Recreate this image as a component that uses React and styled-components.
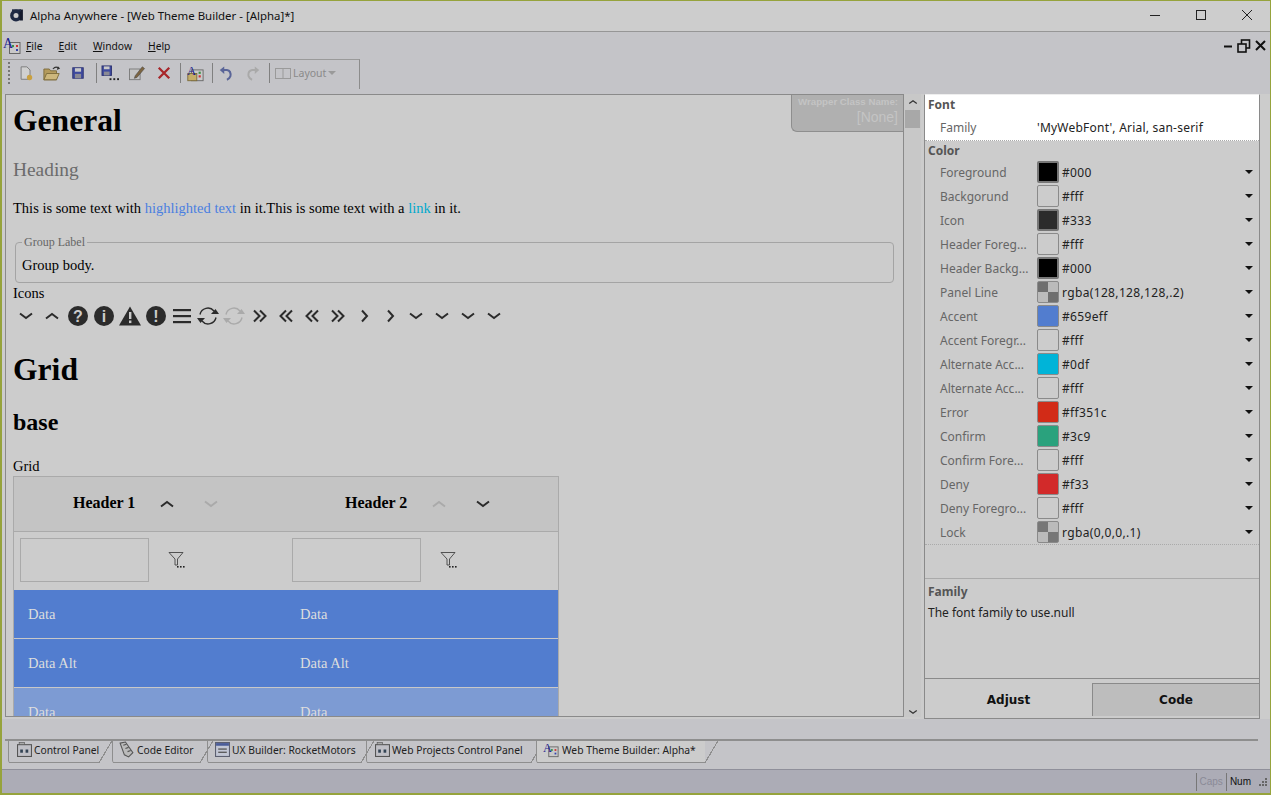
import styled, { createGlobalStyle } from 'styled-components'

const GlobalStyle = createGlobalStyle`
    html, body { margin: 0; padding: 0; background: #ccc; }
    body { font-family: "Noto Sans", "Liberation Sans", sans-serif; overflow: hidden; }
`

const colorRows = [
    { label: 'Foreground', value: '#000', swatch: '#000', dark: true },
    { label: 'Backgorund', value: '#fff', swatch: 'transparent' },
    { label: 'Icon', value: '#333', swatch: '#2b2b2b', dark: true },
    { label: 'Header Foreg...', value: '#fff', swatch: 'transparent' },
    { label: 'Header Backg...', value: '#000', swatch: '#000', dark: true },
    { label: 'Panel Line', value: 'rgba(128,128,128,.2)', checker: '#6f6f6f' },
    { label: 'Accent', value: '#659eff', swatch: '#527dcf' },
    { label: 'Accent Foregr...', value: '#fff', swatch: 'transparent' },
    { label: 'Alternate Acc...', value: '#0df', swatch: '#00b4d8' },
    { label: 'Alternate Acc...', value: '#fff', swatch: 'transparent' },
    { label: 'Error', value: '#ff351c', swatch: '#d22b17' },
    { label: 'Confirm', value: '#3c9', swatch: '#2aa27d' },
    { label: 'Confirm Fore...', value: '#fff', swatch: 'transparent' },
    { label: 'Deny', value: '#f33', swatch: '#d22a2a' },
    { label: 'Deny Foregro...', value: '#fff', swatch: 'transparent' },
    { label: 'Lock', value: 'rgba(0,0,0,.1)', checker: '#777' },
]

const tabs = [
    { label: 'Control Panel', icon: 'panel', width: 104, pad: 8, overlap: 0 },
    { label: 'Code Editor', icon: 'scroll', width: 101, pad: 5, overlap: 6 },
    { label: 'UX Builder: RocketMotors', icon: 'ux', width: 167, pad: 7, overlap: 8 },
    { label: 'Web Projects Control Panel', icon: 'panel', width: 178, pad: 8, overlap: 8 },
    { label: 'Web Theme Builder: Alpha*', icon: 'theme', width: 182, pad: 6, overlap: 0, gap: 3 },
]

const Chevron = ({ dir = 'down', color = '#2b2b2b', size = 16 }) => {
    const paths = {
        down: 'M2 5.5 L8 10 L14 5.5',
        up: 'M2 10.5 L8 6 L14 10.5',
        right: 'M6 2.5 L11 8 L6 13.5',
    }
    return (
        <svg width={size} height={size} viewBox="0 0 16 16" fill="none">
            <path d={paths[dir]} stroke={color} strokeWidth="2" />
        </svg>
    )
}

const Double = ({ left }) => (
    <svg width="16" height="16" viewBox="0 0 16 16" fill="none">
        <g transform={left ? 'translate(16 0) scale(-1 1)' : undefined} stroke="#2b2b2b" strokeWidth="2">
            <path d="M2 2.5 L7.5 8 L2 13.5" />
            <path d="M8 2.5 L13.5 8 L8 13.5" />
        </g>
    </svg>
)

const Disc = ({ mark }) => (
    <svg width="20" height="20" viewBox="0 0 20 20">
        <circle cx="10" cy="10" r="10" fill="#2b2b2b" />
        <text x="10" y="16" textAnchor="middle" fontFamily="Liberation Sans" fontWeight="700" fontSize="16" fill="#ccc">{mark}</text>
    </svg>
)

const Warning = () => (
    <svg width="22" height="20" viewBox="0 0 22 20">
        <path d="M11 0.5 L22 19.5 L0 19.5 Z" fill="#2b2b2b" />
        <rect x="10" y="6" width="2.4" height="7" fill="#ccc" />
        <rect x="10" y="14.5" width="2.4" height="2.6" fill="#ccc" />
    </svg>
)

const Menu = () => (
    <svg width="18" height="16" viewBox="0 0 18 16">
        <rect y="1" width="18" height="2.2" fill="#2b2b2b" />
        <rect y="7" width="18" height="2.2" fill="#2b2b2b" />
        <rect y="13" width="18" height="2.2" fill="#2b2b2b" />
    </svg>
)

const Sync = ({ color = '#2b2b2b' }) => (
    <svg width="22" height="20" viewBox="0 0 22 20" fill="none">
        <path d="M3 8.5 A8 8 0 0 1 17 5" stroke={color} strokeWidth="1.4" />
        <path d="M19 11.5 A8 8 0 0 1 5 15" stroke={color} strokeWidth="1.4" />
        <path d="M14 8 L22 8 L18.5 3 Z" fill={color} />
        <path d="M8 12 L0 12 L3.5 17 Z" fill={color} />
    </svg>
)

const Funnel = () => (
    <svg width="18" height="18" viewBox="0 0 18 18" fill="none">
        <path d="M1 1.5 H15 L9.5 8 V14 L7 14 V8 Z" stroke="#444" strokeWidth="0.9" />
        <rect x="9" y="15" width="1.6" height="1.6" fill="#222" />
        <rect x="12" y="15" width="1.6" height="1.6" fill="#222" />
        <rect x="15" y="15" width="1.6" height="1.6" fill="#222" />
    </svg>
)

const ThemeIcon = ({ size = 18 }) => (
    <svg width={size} height={size} viewBox="0 0 18 18">
        <rect x="6.5" y="5.5" width="10.5" height="11" fill="#c9c9c9" stroke="#666" />
        <rect x="9" y="8" width="2" height="2" fill="#3c8f45" />
        <rect x="13" y="8" width="2" height="2" fill="#c33" />
        <rect x="13" y="12" width="2" height="2" fill="#34a" />
        <text x="0" y="11" fontFamily="Liberation Serif" fontSize="14" fill="#1c1c8c">A</text>
    </svg>
)

const TabIcon = ({ kind }) => {
    if (kind === 'theme') return <ThemeIcon size={16} />
    if (kind === 'scroll') {
        return (
            <svg width="17" height="17" viewBox="0 0 16 16" fill="none">
                <path d="M2 2 L7 1 L14 11 L10 15 L6 13 Z" fill="#bbb" stroke="#555" />
                <path d="M5 4 L8 3 M7 7 L10 6 M9 10 L12 9" stroke="#555" />
            </svg>
        )
    }
    if (kind === 'ux') {
        return (
            <svg width="15" height="15" viewBox="0 0 14 14">
                <rect x="0.5" y="0.5" width="13" height="13" fill="#c2c6d4" stroke="#5c5f70" />
                <rect x="1" y="1" width="12" height="2.5" fill="#4a5c99" />
                <rect x="3" y="6" width="8" height="1.2" fill="#555" />
                <rect x="3" y="9" width="8" height="1.2" fill="#555" />
            </svg>
        )
    }
    return (
        <svg width="15" height="15" viewBox="0 0 14 14">
            <rect x="0.5" y="2.5" width="13" height="11" fill="#c0c0c6" stroke="#555" />
            <rect x="2" y="0.5" width="5" height="2" fill="#aaa" stroke="#555" strokeWidth="0.6" />
            <rect x="3" y="7" width="2.5" height="3" fill="#345" />
            <rect x="8" y="7" width="2.5" height="3" fill="#345" />
        </svg>
    )
}

const ToolIcons = {
    newFile: (
        <svg width="16" height="17" viewBox="0 0 18 18">
            <path d="M3.5 1.5 H10 L13.5 5 V15.5 H3.5 Z" fill="#d0d0d0" stroke="#777" />
            <circle cx="13" cy="13.5" r="3" fill="#c9a040" />
        </svg>
    ),
    open: (
        <svg width="18" height="17" viewBox="0 0 20 18">
            <path d="M1 4 H7 L8.5 6 H15 V16 H1 Z" fill="#b39a5c" stroke="#7b6a3a" />
            <path d="M1 16 L4 9 H18 L15 16 Z" fill="#cdb77c" stroke="#7b6a3a" />
            <path d="M11 4 Q14 0.5 17 3" stroke="#333" strokeWidth="1.2" fill="none" />
            <path d="M15.5 5 L19 3.5 L16.5 1 Z" fill="#333" />
        </svg>
    ),
    save: (
        <svg width="14" height="14" viewBox="0 0 16 16">
            <rect x="2" y="2" width="12" height="12" fill="#3e4a9e" stroke="#2c3270" />
            <rect x="4.5" y="2.5" width="7" height="4" fill="#c8c8c8" />
            <rect x="4.5" y="9" width="7" height="5" fill="#8a8a94" />
        </svg>
    ),
    saveAs: (
        <svg width="19" height="17" viewBox="0 0 20 18">
            <rect x="1" y="1" width="10" height="10" fill="#3e4a9e" stroke="#2c3270" />
            <rect x="3" y="1.5" width="6" height="3" fill="#c8c8c8" />
            <rect x="3" y="7" width="6" height="4" fill="#8a8a94" />
            <rect x="9" y="14" width="2" height="2" fill="#222" />
            <rect x="13" y="14" width="2" height="2" fill="#222" />
            <rect x="17" y="14" width="2" height="2" fill="#222" />
        </svg>
    ),
    edit: (
        <svg width="18" height="16" viewBox="0 0 20 18">
            <rect x="1.5" y="4.5" width="12" height="12" fill="#c4c4c4" stroke="#777" />
            <path d="M8 12 L16 2 L18.5 4 L10 14 L7 15 Z" fill="#7d6540" stroke="#444" strokeWidth="0.6" />
        </svg>
    ),
    del: (
        <svg width="14" height="14" viewBox="0 0 16 16">
            <path d="M2 2 L14 14 M14 2 L2 14" stroke="#a8262a" strokeWidth="2.6" />
        </svg>
    ),
    theme: (
        <svg width="18" height="17" viewBox="0 0 20 18">
            <rect x="6" y="5" width="13" height="12" fill="#c9c9c9" stroke="#666" />
            <rect x="2" y="9" width="10" height="8" fill="#c5ad68" stroke="#7b6a3a" />
            <rect x="14" y="7" width="2.4" height="2.4" fill="#3c8f45" />
            <rect x="14" y="11" width="2.4" height="2.4" fill="#c33" />
            <text x="1" y="11" fontFamily="Liberation Serif" fontSize="14" fill="#1c1c8c">A</text>
        </svg>
    ),
    undo: (
        <svg width="16" height="17" viewBox="0 0 18 18" fill="none">
            <path d="M5 5 H10 Q15 6 14 12 Q13 15 10 16" stroke="#5a6598" strokeWidth="2.2" />
            <path d="M7 1 L2 5 L7 9.5 Z" fill="#5a6598" />
        </svg>
    ),
    redo: (
        <svg width="16" height="17" viewBox="0 0 18 18" fill="none">
            <path d="M13 5 H8 Q3 6 4 12 Q5 15 8 16" stroke="#a9a9a9" strokeWidth="2.2" />
            <path d="M11 1 L16 5 L11 9.5 Z" fill="#a9a9a9" />
        </svg>
    ),
    layout: (
        <svg width="16" height="11" viewBox="0 0 16 11" fill="none">
            <rect x="0.5" y="0.5" width="15" height="10" stroke="#9a9a9a" />
            <path d="M8 0.5 V10.5" stroke="#9a9a9a" />
        </svg>
    ),
}

export default function App() {
    return (
        <Window>
            <GlobalStyle />
            <TitleBar>
                <svg width="16" height="16" viewBox="0 0 16 16" fill="none">
                    <circle cx="7" cy="8.5" r="4.2" stroke="#1f2a44" strokeWidth="3.4" />
                    <rect x="10.5" y="2.5" width="3.4" height="11" fill="#141a2c" />
                    <path d="M3 3.4 H12" stroke="#1f2a44" strokeWidth="2.2" />
                </svg>
                <TitleText>Alpha Anywhere - [Web Theme Builder - [Alpha]*]</TitleText>
                <WindowButtons>
                    <CaptionButton>
                        <svg width="12" height="12" viewBox="0 0 12 12"><path d="M1 6.5 H11" stroke="#222" /></svg>
                    </CaptionButton>
                    <CaptionButton>
                        <svg width="12" height="12" viewBox="0 0 12 12"><rect x="1.5" y="1.5" width="9" height="9" fill="none" stroke="#222" /></svg>
                    </CaptionButton>
                    <CaptionButton>
                        <svg width="12" height="12" viewBox="0 0 12 12"><path d="M1 1 L11 11 M11 1 L1 11" stroke="#222" /></svg>
                    </CaptionButton>
                </WindowButtons>
            </TitleBar>

            <MenuBar>
                <ThemeIcon />
                <MenuItem><u>F</u>ile</MenuItem>
                <MenuItem><u>E</u>dit</MenuItem>
                <MenuItem><u>W</u>indow</MenuItem>
                <MenuItem><u>H</u>elp</MenuItem>
                <MdiButtons>
                    <svg width="10" height="10" viewBox="0 0 10 10"><path d="M1 5.5 H9" stroke="#111" strokeWidth="2" /></svg>
                    <svg width="14" height="14" viewBox="0 0 14 14" fill="none">
                        <rect x="4.5" y="1" width="8" height="8" stroke="#111" strokeWidth="1.6" />
                        <rect x="1" y="5" width="8" height="8" fill="#c4c4c8" stroke="#111" strokeWidth="1.6" />
                    </svg>
                    <svg width="11" height="11" viewBox="0 0 11 11"><path d="M1 1 L10 10 M10 1 L1 10" stroke="#111" strokeWidth="2" /></svg>
                </MdiButtons>
            </MenuBar>

            <ToolBar>
                <Grip />
                <ToolSlot $w={26}>{ToolIcons.newFile}</ToolSlot>
                <ToolSlot $w={26}>{ToolIcons.open}</ToolSlot>
                <ToolSlot $w={26}>{ToolIcons.save}</ToolSlot>
                <ToolSep $l={5} />
                <ToolSlot $w={22}>{ToolIcons.saveAs}</ToolSlot>
                <ToolSlot $w={32}>{ToolIcons.edit}</ToolSlot>
                <ToolSlot $w={22}>{ToolIcons.del}</ToolSlot>
                <ToolSep $l={5} />
                <ToolSlot $w={24}>{ToolIcons.theme}</ToolSlot>
                <ToolSep $l={5} />
                <ToolSlot $w={22}>{ToolIcons.undo}</ToolSlot>
                <ToolSlot $w={32}>{ToolIcons.redo}</ToolSlot>
                <ToolSep $l={0} />
                <LayoutButton>
                    {ToolIcons.layout}
                    <span>Layout</span>
                    <Caret $color="#9a9a9a" />
                </LayoutButton>
            </ToolBar>

            <Workspace>
                <Editor>
                    <Preview>
                        <WrapperTag>
                            <small>Wrapper Class Name:</small>
                            <strong>[None]</strong>
                        </WrapperTag>
                        <H1>General</H1>
                        <Heading>Heading</Heading>
                        <Para>
                            This is some text with <Accent>highlighted text</Accent> in it.This is some text with a <Link>link</Link> in it.
                        </Para>
                        <Group>
                            <legend>Group Label</legend>
                            Group body.
                        </Group>
                        <IconsLabel>Icons</IconsLabel>
                        <IconRow>
                            <IconCell><Chevron /></IconCell>
                            <IconCell><Chevron dir="up" /></IconCell>
                            <IconCell><Disc mark="?" /></IconCell>
                            <IconCell><Disc mark="i" /></IconCell>
                            <IconCell><Warning /></IconCell>
                            <IconCell><Disc mark="!" /></IconCell>
                            <IconCell><Menu /></IconCell>
                            <IconCell><Sync /></IconCell>
                            <IconCell><Sync color="#aaa" /></IconCell>
                            <IconCell><Double /></IconCell>
                            <IconCell><Double left /></IconCell>
                            <IconCell><Double left /></IconCell>
                            <IconCell><Double /></IconCell>
                            <IconCell><Chevron dir="right" /></IconCell>
                            <IconCell><Chevron dir="right" /></IconCell>
                            <IconCell><Chevron /></IconCell>
                            <IconCell><Chevron /></IconCell>
                            <IconCell><Chevron /></IconCell>
                            <IconCell><Chevron /></IconCell>
                        </IconRow>
                        <H1 $top={24}>Grid</H1>
                        <H2>base</H2>
                        <GridLabel>Grid</GridLabel>
                        <Table>
                            <HeaderRow>
                                <HeaderCell>
                                    <b>Header 1</b>
                                    <Chevron dir="up" />
                                    <Chevron color="#aaa" />
                                </HeaderCell>
                                <HeaderCell>
                                    <b>Header 2</b>
                                    <Chevron dir="up" color="#aaa" />
                                    <Chevron />
                                </HeaderCell>
                            </HeaderRow>
                            <FilterRow>
                                <FilterCell><FilterInput /><Funnel /></FilterCell>
                                <FilterCell><FilterInput /><Funnel /></FilterCell>
                            </FilterRow>
                            <DataRow><DataCell>Data</DataCell><DataCell>Data</DataCell></DataRow>
                            <DataRow><DataCell>Data Alt</DataCell><DataCell>Data Alt</DataCell></DataRow>
                            <DataRow $light><DataCell>Data</DataCell><DataCell>Data</DataCell></DataRow>
                        </Table>
                    </Preview>
                    <ScrollBar>
                        <Chevron dir="up" size={10} color="#333" />
                        <ScrollThumb />
                        <ScrollSpacer />
                        <Chevron size={10} color="#333" />
                    </ScrollBar>
                </Editor>

                <SidePanel>
                    <FontSection>
                        <SectionTitle>Font</SectionTitle>
                        <PropRow>
                            <PropLabel>Family</PropLabel>
                            <PropText>'MyWebFont', Arial, san-serif</PropText>
                        </PropRow>
                    </FontSection>
                    <ColorSection>
                        <SectionTitle>Color</SectionTitle>
                        {colorRows.map((row, i) => (
                            <ColorRow key={i}>
                                <PropLabel>{row.label}</PropLabel>
                                <Swatch $color={row.swatch} $dark={row.dark} $checker={row.checker} />
                                <ColorValue>{row.value}</ColorValue>
                                <Caret $color="#111" />
                            </ColorRow>
                        ))}
                    </ColorSection>
                    <HelpSection>
                        <SectionTitle>Family</SectionTitle>
                        <HelpText>The font family to use.null</HelpText>
                    </HelpSection>
                    <PanelTabs>
                        <PanelTab>Adjust</PanelTab>
                        <PanelTab $inactive>Code</PanelTab>
                    </PanelTabs>
                </SidePanel>
            </Workspace>

            <TabStrip>
                <TabLine />
                <TabRow>
                    {tabs.map((tab) => (
                        <Tab key={tab.label} $active={tab.icon === 'theme'} $width={tab.width} $pad={tab.pad} $overlap={tab.overlap} $gap={tab.gap}>
                            <TabIcon kind={tab.icon} />
                            {tab.label}
                        </Tab>
                    ))}
                </TabRow>
            </TabStrip>

            <StatusBar>
                <StatusCell $off>Caps</StatusCell>
                <StatusCell>Num</StatusCell>
                <Resize>
                    <svg width="10" height="10" viewBox="0 0 10 10" fill="#666">
                        <rect x="7" y="1" width="2" height="2" />
                        <rect x="4" y="4" width="2" height="2" />
                        <rect x="7" y="4" width="2" height="2" />
                        <rect x="1" y="7" width="2" height="2" />
                        <rect x="4" y="7" width="2" height="2" />
                        <rect x="7" y="7" width="2" height="2" />
                    </svg>
                </Resize>
            </StatusBar>
        </Window>
    )
}

const Window = styled.div`
    width: 1271px;
    height: 795px;
    box-sizing: border-box;
    border: 1px solid #96a33c;
    border-bottom-width: 2px;
    border-left-width: 2px;
    background: #c4c4c8;
    display: flex;
    flex-direction: column;
    overflow: hidden;
`

const TitleBar = styled.div`
    height: 31px;
    flex: none;
    box-sizing: border-box;
    background: #cdcdcd;
    border-bottom: 1px solid #969696;
    display: flex;
    align-items: center;
    padding: 0 0 2px 7px;
    color: #111;
`

const TitleText = styled.span`
    font: 11.45px "Noto Sans", sans-serif;
    margin-left: 5px;
`

const WindowButtons = styled.div`
    margin-left: auto;
    display: flex;
`

const CaptionButton = styled.div`
    width: 46px;
    display: flex;
    justify-content: center;
`

const MenuBar = styled.div`
    height: 27px;
    flex: none;
    display: flex;
    align-items: center;
    padding-left: 1px;
`

const MenuItem = styled.span`
    font: 10.3px "Noto Sans", sans-serif;
    color: #111;
    margin-left: 6px;
    margin-right: 10px;
    &:first-of-type { margin-left: 5px; }
`

const MdiButtons = styled.div`
    margin-left: auto;
    display: flex;
    align-items: center;
    gap: 4px;
    padding-right: 4px;
`

const ToolBar = styled.div`
    height: 30px;
    width: 357px;
    box-sizing: border-box;
    flex: none;
    display: flex;
    align-items: center;
    padding: 0 0 3px 5px;
    margin-left: 1px;
    border-top: 1px solid #9a9a9a;
    border-right: 1px solid #8c8c8c;
`

const Grip = styled.div`
    width: 2px;
    height: 22px;
    margin-right: 3px;
    background: repeating-linear-gradient(to bottom, #777 0 2px, transparent 2px 4px);
`

const ToolSlot = styled.div`
    width: ${(p) => p.$w}px;
    display: flex;
    justify-content: center;
`

const ToolSep = styled.div`
    width: 1px;
    height: 20px;
    background: #808080;
    margin: 0 2px 0 ${(p) => p.$l}px;
`

const LayoutButton = styled.div`
    display: flex;
    align-items: center;
    gap: 2px;
    padding-left: 3px;
    font: 10.5px "Noto Sans", sans-serif;
    color: #8a8a8a;
`

const Caret = styled.span`
    width: 0;
    height: 0;
    border-left: 4px solid transparent;
    border-right: 4px solid transparent;
    border-top: 4px solid ${(p) => p.$color};
`

const Workspace = styled.div`
    height: 625px;
    flex: none;
    margin-top: 5px;
    padding-left: 3px;
    display: flex;
    gap: 3px;
    background: #ccc;
`

const Editor = styled.div`
    width: 916px;
    display: flex;
`

const Preview = styled.div`
    position: relative;
    width: 899px;
    box-sizing: border-box;
    height: 623px;
    border: 1px solid #8a8a8a;
    padding: 0 7px;
    overflow: hidden;
    font-family: "Liberation Serif", serif;
    font-size: 14.5px;
    color: #000;
    background: #ccc;
`

const WrapperTag = styled.div`
    position: absolute;
    top: 0;
    right: 0;
    width: 112px;
    height: 37px;
    box-sizing: border-box;
    border: 1px solid #8e8e8e;
    border-top: 0;
    border-right: 0;
    border-bottom-left-radius: 6px;
    background: #b0b0b0;
    font-family: "Liberation Sans", sans-serif;
    text-align: right;
    padding: 1px 5px;
    color: #c4c4c4;
    small { display: block; font-size: 9.7px; font-weight: 700; line-height: 11px; }
    strong { display: block; font-size: 14px; font-weight: 400; margin-top: 2px; }
`

const H1 = styled.h1`
    margin: ${(p) => p.$top || 7}px 0 0;
    font-size: 31.6px;
    line-height: 37px;
    font-weight: 700;
`

const Heading = styled.div`
    margin-top: 20px;
    font-size: 19.4px;
    line-height: 22px;
    color: #6b6b6b;
`

const Para = styled.p`
    margin: 19px 0 0;
    line-height: 17px;
`

const Accent = styled.span`
    color: #4a7fe0;
`

const Link = styled.span`
    color: #00a9cc;
`

const Group = styled.fieldset`
    margin: 19px 2px 0 2px;
    padding: 8px 6px 8px;
    border: 1px solid #a4a4a4;
    border-radius: 4px;
    line-height: 17px;
    legend {
        font-size: 12px;
        color: #666;
        padding: 0 2px;
        line-height: 13px;
    }
`

const IconsLabel = styled.div`
    margin-top: 2px;
    line-height: 17px;
`

const IconRow = styled.div`
    display: flex;
    margin-top: 3px;
    height: 22px;
    align-items: center;
`

const IconCell = styled.span`
    width: 26px;
    display: flex;
    justify-content: center;
`

const H2 = styled.h2`
    margin: 20px 0 0;
    font-size: 24px;
    line-height: 28px;
`

const GridLabel = styled.div`
    margin-top: 22px;
    line-height: 17px;
`

const Table = styled.div`
    width: 546px;
    box-sizing: border-box;
    margin-top: 1px;
    border: 1px solid #aaa;
    border-bottom: 0;
`

const HeaderRow = styled.div`
    display: grid;
    grid-template-columns: 1fr 1fr;
    height: 55px;
    box-sizing: border-box;
    padding-bottom: 2px;
    background: #c4c4c4;
    border-bottom: 1px solid #aaa;
`

const HeaderCell = styled.div`
    display: flex;
    align-items: center;
    padding-left: 59px;
    gap: 28px;
    font-size: 16px;
    b { margin-right: -4px; }
    svg { margin-top: 2px; }
`

const FilterRow = styled.div`
    display: grid;
    grid-template-columns: 1fr 1fr;
    height: 58px;
    box-sizing: border-box;
    padding-bottom: 2px;
`

const FilterCell = styled.div`
    display: flex;
    align-items: center;
    padding-left: 6px;
    gap: 19px;
`

const FilterInput = styled.div`
    width: 129px;
    height: 44px;
    box-sizing: border-box;
    border: 1px solid #aaa;
`

const DataRow = styled.div`
    display: grid;
    grid-template-columns: 1fr 1fr;
    height: 49px;
    box-sizing: border-box;
    border-bottom: 1px solid #c8c8c8;
    background: ${(p) => (p.$light ? '#7d9bd3' : '#527dcf')};
`

const DataCell = styled.div`
    padding-left: 14px;
    line-height: 49px;
    color: #ddd;
`

const ScrollBar = styled.div`
    width: 17px;
    height: 623px;
    background: #c8c8c8;
    display: flex;
    flex-direction: column;
    align-items: center;
    padding-top: 3px;
    box-sizing: border-box;
`

const ScrollThumb = styled.div`
    width: 15px;
    height: 18px;
    background: #a8a8a8;
    margin-top: 3px;
`

const ScrollSpacer = styled.div`
    flex: 1;
`

const SidePanel = styled.div`
    width: 336px;
    height: 625px;
    box-sizing: border-box;
    border: 1px solid #8a8a8a;
    border-top: 1px solid #eee;
    display: flex;
    flex-direction: column;
    font-family: "Noto Sans", sans-serif;
    font-size: 12px;
`

const FontSection = styled.div`
    background: #fff;
    height: 46px;
    flex: none;
    border-bottom: 1px dotted #aaa;
    box-sizing: border-box;
`

const SectionTitle = styled.div`
    font-weight: 700;
    font-size: 12px;
    color: #555;
    line-height: 18px;
    padding: 1px 0 0 3px;
`

const PropRow = styled.div`
    display: flex;
    align-items: center;
    height: 26px;
`

const PropLabel = styled.span`
    width: 97px;
    padding-left: 15px;
    flex: none;
    color: #666;
    white-space: nowrap;
`

const PropText = styled.span`
    color: #222;
    letter-spacing: 0.22px;
`

const ColorSection = styled.div`
    height: 438px;
    flex: none;
    box-sizing: border-box;
    border-bottom: 1px solid #aaa;
`

const ColorRow = styled.div`
    display: flex;
    align-items: center;
    height: 24px;
    padding-right: 6px;
    &:last-child { border-bottom: 1px dotted #aaa; }
`

const Swatch = styled.span`
    width: 22px;
    height: 22px;
    box-sizing: border-box;
    flex: none;
    margin-right: 3px;
    border: ${(p) => (p.$dark ? '2px solid #777' : '1px solid #8a8a8a')};
    border-radius: 2px;
    background-color: ${(p) => p.$color || '#bbb'};
    background-image: ${(p) =>
        p.$checker
            ? `linear-gradient(${p.$checker}, ${p.$checker}), linear-gradient(${p.$checker}, ${p.$checker})`
            : 'none'};
    background-size: 50% 50%;
    background-repeat: no-repeat;
    background-position: 0 0, 100% 100%;
`

const ColorValue = styled.span`
    flex: 1;
    color: #222;
    letter-spacing: 0.35px;
`

const HelpSection = styled.div`
    flex: 1;
    padding-top: 3px;
`

const HelpText = styled.div`
    padding-left: 3px;
    margin-top: 2px;
    color: #222;
    line-height: 20px;
`

const PanelTabs = styled.div`
    height: 40px;
    flex: none;
    box-sizing: border-box;
    display: grid;
    grid-template-columns: 167px 1fr;
    border-top: 1px solid #8a8a8a;
`

const PanelTab = styled.div`
    display: flex;
    align-items: center;
    justify-content: center;
    font-family: "DejaVu Sans", sans-serif;
    font-weight: 700;
    font-size: 12px;
    color: #111;
    padding-top: 2px;
    ${(p) => p.$inactive && 'background: #bdbdbd; border-left: 1px solid #8a8a8a; border-top: 1px solid #8a8a8a; margin-top: 4px; margin-bottom: 2px; padding-top: 0;'}
`

const TabStrip = styled.div`
    height: 50px;
    flex: none;
    padding: 20px 12px 0 3px;
    box-sizing: border-box;
    background: #c4c4c8;
`

const TabLine = styled.div`
    height: 2px;
    background: #8e8e8e;
`

const TabRow = styled.div`
    display: flex;
    padding-left: 3px;
`

const Tab = styled.div`
    position: relative;
    width: ${(p) => p.$width}px;
    flex: none;
    box-sizing: border-box;
    height: 22px;
    padding: 0 0 5px ${(p) => p.$pad}px;
    margin-right: ${(p) => -p.$overlap}px;
    display: flex;
    align-items: center;
    gap: ${(p) => p.$gap || 2}px;
    font: 10.3px "Noto Sans", sans-serif;
    color: #222;
    white-space: nowrap;
    border-left: 1px solid #8e8e8e;
    border-bottom-left-radius: 3px;
    background: ${(p) => (p.$active ? 'linear-gradient(to right, #ccc, #ccc) no-repeat 0 0 / calc(100% - 13px) 100%' : 'none')};

    &::before {
        content: "";
        position: absolute;
        left: 0;
        right: 12px;
        bottom: 0;
        height: 1px;
        background: #8e8e8e;
    }

    &::after {
        content: "";
        position: absolute;
        top: 0;
        right: 0;
        bottom: 0;
        width: 13px;
        background: linear-gradient(to top left, transparent 48%, #8e8e8e 48%, #8e8e8e 53%, transparent 53%);
    }
`

const StatusBar = styled.div`
    flex: 1;
    background: #acacb6;
    border-top: 1px solid #8f8f9a;
    display: flex;
    justify-content: flex-end;
    align-items: center;
    padding-right: 2px;
    font: 10px "Liberation Sans", sans-serif;
`

const StatusCell = styled.span`
    border-left: 1px solid #777;
    height: 18px;
    line-height: 18px;
    padding: 0 3px;
    color: ${(p) => (p.$off ? '#8a8a96' : '#111')};
`

const Resize = styled.div`
    margin-left: 4px;
    height: 10px;
`
